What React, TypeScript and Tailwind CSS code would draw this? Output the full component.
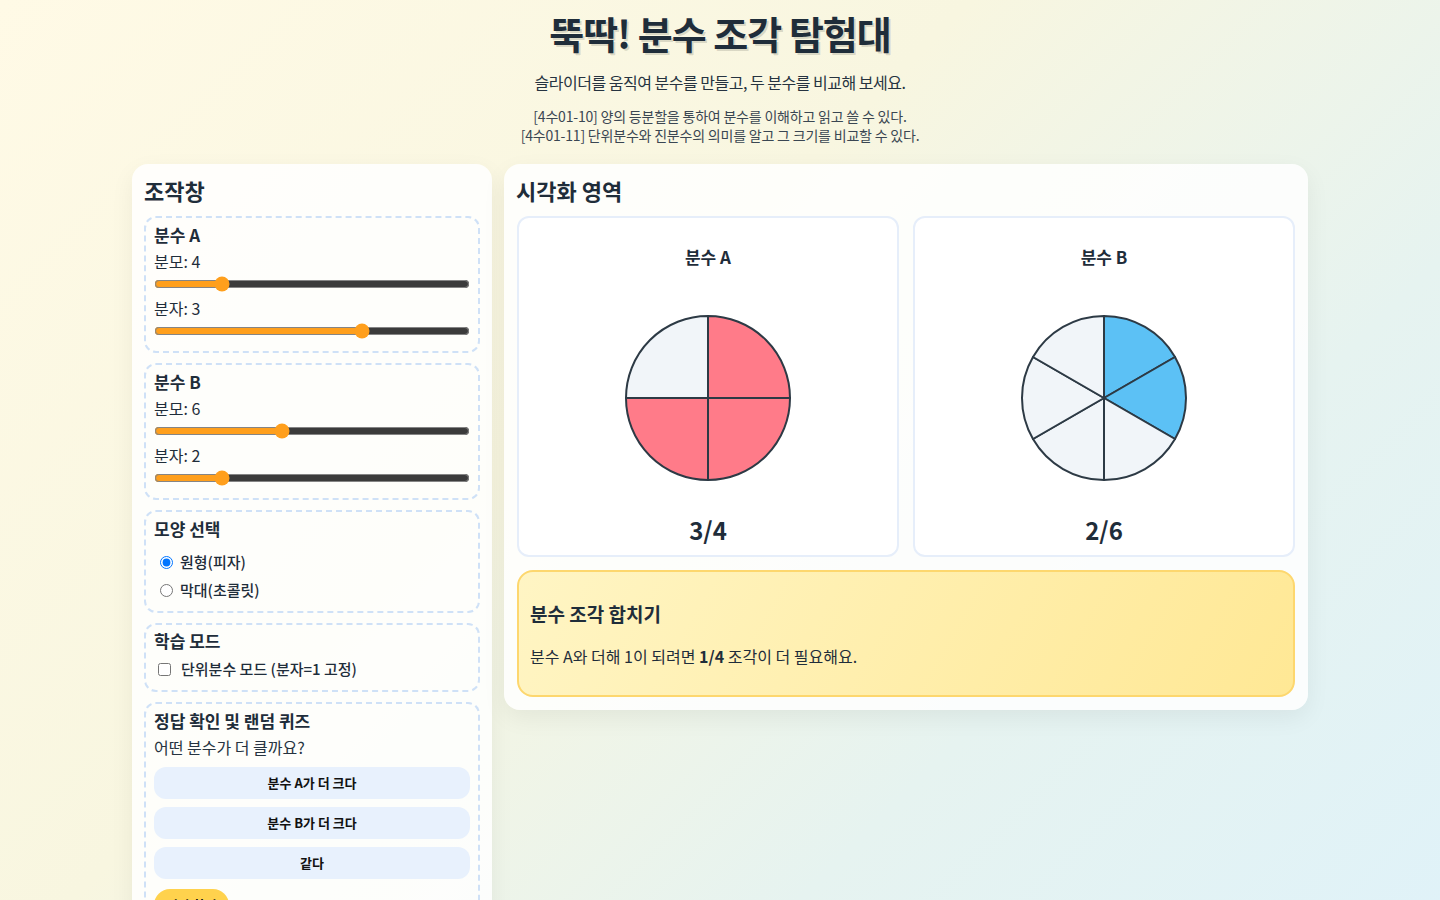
import React, { useState } from "react";

type PieProps = { den: number; num: number; color: string };

function Pie({ den, num, color }: PieProps) {
  const r = 82;
  const c = 84;
  const slices = Array.from({ length: den }, (_, i) => {
    const a0 = (i / den) * Math.PI * 2 - Math.PI / 2;
    const a1 = ((i + 1) / den) * Math.PI * 2 - Math.PI / 2;
    const x0 = c + r * Math.cos(a0);
    const y0 = c + r * Math.sin(a0);
    const x1 = c + r * Math.cos(a1);
    const y1 = c + r * Math.sin(a1);
    const large = a1 - a0 > Math.PI ? 1 : 0;
    return (
      <path
        key={i}
        d={`M${c},${c} L${x0},${y0} A${r},${r} 0 ${large} 1 ${x1},${y1} Z`}
        fill={i < num ? color : "#f1f5f9"}
        stroke="#2d3a45"
        strokeWidth={2}
        strokeLinejoin="round"
      />
    );
  });
  return (
    <svg width={168} height={168} viewBox="0 0 168 168">
      {slices}
    </svg>
  );
}

function Slider({ label, value, min, max, onChange, className = "" }: { label: string; value: number; min: number; max: number; onChange: (v: number) => void; className?: string }) {
  return (
    <div className={`flex flex-col ${className}`}>
      <label className="text-[16px] leading-6 text-[#1f2d3a]">
        {label}: {value}
      </label>
      <input
        type="range"
        min={min}
        max={max}
        value={value}
        onChange={(e) => onChange(Number(e.target.value))}
        className="mt-[3px] h-4 w-full accent-[#ff9f1c]"
      />
    </div>
  );
}

function Box({ children, className = "" }: { children: React.ReactNode; className?: string }) {
  return (
    <div className={`rounded-xl border-2 border-dashed border-[#cfe1f7] px-2 ${className}`}>
      {children}
    </div>
  );
}

export default function App() {
  const [denA, setDenA] = useState(4);
  const [numA, setNumA] = useState(3);
  const [denB, setDenB] = useState(6);
  const [numB, setNumB] = useState(2);
  const [shape, setShape] = useState("circle");
  const [unitMode, setUnitMode] = useState(false);

  return (
    <div
      className="min-h-screen bg-[linear-gradient(135deg,#fffae6_0%,#f8f6e0_40%,#e6f3f0_70%,#dff2f9_100%)] pb-10 text-[#1f2d3a]"
      style={{ fontFamily: '"Noto Sans CJK KR", "Noto Sans", sans-serif' }}
    >
      <header className="flex flex-col items-center pt-[10px]">
        <h1 className="text-[38px] leading-[46px] font-bold tracking-[-1px] text-[#1f2d3a] [text-shadow:2px_2px_0_rgba(0,0,0,0.12)]">
          뚝딱! 분수 조각 탐험대
        </h1>
        <p className="mt-[14px] text-[16px] leading-6 tracking-[-0.5px] text-[#263340]">
          슬라이더를 움직여 분수를 만들고, 두 분수를 비교해 보세요.
        </p>
        <div className="mt-[13px] text-center text-[14px] leading-[19px] tracking-[-0.2px] text-[#3a4652]">
          <p>[4수01-10] 양의 등분할을 통하여 분수를 이해하고 읽고 쓸 수 있다.</p>
          <p>[4수01-11] 단위분수와 진분수의 의미를 알고 그 크기를 비교할 수 있다.</p>
        </div>
      </header>

      <main className="mx-auto mt-[19px] grid w-[1176px] grid-cols-[360px_1fr] items-start gap-3">
        <section className="rounded-2xl bg-white/85 px-3 pt-[11px] pb-3 shadow-[0_8px_24px_rgba(0,0,0,0.06)]">
          <h2 className="text-[22px] leading-[30px] font-bold">조작창</h2>
          <div className="mt-[11px] flex flex-col gap-[10px]">
            <Box className="pt-[5px] pb-[12px]">
              <h3 className="text-[17px] leading-6 font-bold">분수 A</h3>
              <Slider className="mt-[2px]" label="분모" value={denA} min={2} max={12} onChange={(v) => { setDenA(v); setNumA(Math.min(numA, v)); }} />
              <Slider className="mt-[4px]" label="분자" value={numA} min={1} max={denA} onChange={setNumA} />
            </Box>
            <Box className="pt-[5px] pb-[12px]">
              <h3 className="text-[17px] leading-6 font-bold">분수 B</h3>
              <Slider className="mt-[2px]" label="분모" value={denB} min={2} max={12} onChange={(v) => { setDenB(v); setNumB(Math.min(numB, v)); }} />
              <Slider className="mt-[4px]" label="분자" value={numB} min={1} max={denB} onChange={setNumB} />
            </Box>
            <Box className="pt-[5px] pb-[10px]">
              <h3 className="text-[17px] leading-6 font-bold">모양 선택</h3>
              <div className="mt-[10px] flex flex-col gap-[6px]">
                <label className="flex items-center gap-[7px] text-[15px] leading-[22px] font-medium">
                  <input type="radio" name="shape" checked={shape === "circle"} onChange={() => setShape("circle")} className="ml-[6px] h-[13px] w-[13px]" />
                  원형(피자)
                </label>
                <label className="flex items-center gap-[7px] text-[15px] leading-[22px] font-medium">
                  <input type="radio" name="shape" checked={shape === "bar"} onChange={() => setShape("bar")} className="ml-[6px] h-[13px] w-[13px]" />
                  막대(초콜릿)
                </label>
              </div>
            </Box>
            <Box className="pt-[4px] pb-[10px]">
              <h3 className="text-[17px] leading-6 font-bold">학습 모드</h3>
              <label className="mt-[5px] flex items-center gap-[10px] text-[15px] leading-[22px] font-medium">
                <input type="checkbox" checked={unitMode} onChange={(e) => setUnitMode(e.target.checked)} className="ml-[4px] h-[13px] w-[13px]" />
                단위분수 모드 (분자=1 고정)
              </label>
            </Box>
            <Box className="pt-[5px] pb-3">
              <h3 className="text-[17px] leading-6 font-bold">정답 확인 및 랜덤 퀴즈</h3>
              <p className="mt-[2px] text-[16px] leading-6 text-[#263340]">어떤 분수가 더 클까요?</p>
              <div className="mt-2 flex flex-col gap-2">
                {["분수 A가 더 크다", "분수 B가 더 크다", "같다"].map((t) => (
                  <button key={t} className="h-8 w-full rounded-xl bg-[#e8f1fd] text-[13px] font-bold text-[#111]">
                    {t}
                  </button>
                ))}
              </div>
              <button className="mt-[10px] h-8 rounded-full bg-[#ffd24d] px-3 text-[13px] font-bold text-[#111]">
                정답 확인
              </button>
            </Box>
          </div>
        </section>

        <section className="rounded-2xl bg-white/85 px-3 pt-[11px] pb-[13px] shadow-[0_8px_24px_rgba(0,0,0,0.06)]">
          <h2 className="text-[22px] leading-[30px] font-bold">시각화 영역</h2>
          <div className="mt-[11px] grid grid-cols-2 gap-[14px] px-px">
            {[
              { t: "분수 A", d: denA, n: numA, c: "#ff7b89" },
              { t: "분수 B", d: denB, n: numB, c: "#5cc1f5" },
            ].map((f) => (
              <div key={f.t} className="flex h-[341px] flex-col items-center rounded-xl border-2 border-[#e6eefa] bg-white pt-[27px]">
                <h3 className="text-[17px] leading-6 font-bold">{f.t}</h3>
                <div className="mt-[45px]">
                  <Pie den={f.d} num={f.n} color={f.c} />
                </div>
                <div className="mt-[32px] text-[24px] leading-8 font-bold">
                  {f.n}/{f.d}
                </div>
              </div>
            ))}
          </div>
          <div className="mx-px mt-[13px] flex flex-col gap-[17px] rounded-2xl border-2 border-[#fdd76e] bg-[linear-gradient(120deg,#fff5c4,#ffe895)] px-[11px] pt-[29px] pb-[27px]">
            <h3 className="text-[19px] leading-[26px] font-bold">분수 조각 합치기</h3>
            <p className="text-[16px] leading-6">
              분수 A와 더해 1이 되려면 <b>{denA - numA}/{denA}</b> 조각이 더 필요해요.
            </p>
          </div>
        </section>
      </main>
    </div>
  );
}
